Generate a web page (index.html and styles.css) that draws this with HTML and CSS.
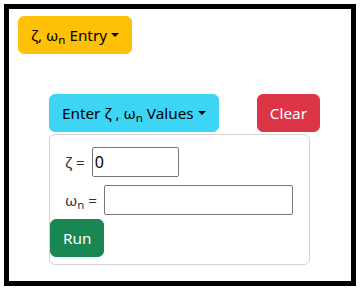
FILE: index.html
```html
<!DOCTYPE html>
<html>
<head>
    <title>Damping Entry</title>
    <link rel="stylesheet" href="styles.css">
</head>
<body>
    <div class="frame">
        <button class="btn btn-warning dropdown-toggle">ζ, ω<sub>n</sub> Entry</button>

        <div class="panel">
            <div class="panel-head">
                <button class="btn btn-info dropdown-toggle">Enter ζ , ω<sub>n</sub> Values</button>
                <button class="btn btn-danger">Clear</button>
            </div>
            <div class="card">
                <div class="field">
                    <label for="zeta">ζ =</label>
                    <input type="text" id="zeta" class="zeta-input" value="0">
                </div>
                <div class="field">
                    <label for="omega">ω<sub>n</sub> =</label>
                    <input type="text" id="omega" class="omega-input">
                </div>
                <button class="btn btn-success">Run</button>
            </div>
        </div>
    </div>
</body>
</html>
```

FILE: styles.css
```css
body {
    margin: 0;
    font-family: "Noto Sans", "Open Sans", sans-serif;
    font-size: 15.3px;
    line-height: 1.5;
    color: #212529;
    background-color: #fff;
}
.frame {
    box-sizing: border-box;
    width: 352px;
    height: 282px;
    margin: 4px;
    border: 5px solid #000;
    padding: 7px 9px;
}
.btn {
    font-family: inherit;
    font-size: 15.3px;
    line-height: 24px;
    padding: 6px 12px;
    border: 1px solid transparent;
    border-radius: 6px;
    cursor: pointer;
    color: #000;
}
.btn sub, .field sub {
    font-size: 0.75em;
    line-height: 0;
    vertical-align: -0.25em;
}
.dropdown-toggle::after {
    content: "";
    display: inline-block;
    margin-left: 0.255em;
    vertical-align: 0.255em;
    border-top: 0.3em solid;
    border-right: 0.3em solid transparent;
    border-left: 0.3em solid transparent;
}
.btn-warning {
    background-color: #ffc107;
    border-color: #ffc107;
}
.btn-info {
    background-color: #3dd5f3;
    border-color: #3dd5f3;
}
.btn-danger {
    background-color: #dc3545;
    border-color: #dc3545;
    color: #fff;
}
.btn-success {
    background-color: #198754;
    border-color: #198754;
    color: #fff;
}
.panel {
    width: 271px;
    margin: 40px 0 0 31px;
}
.panel-head {
    display: flex;
    justify-content: space-between;
}
.card {
    box-sizing: border-box;
    width: 261px;
    height: 131px;
    margin-top: 2px;
    padding: 12px 0 0 0;
    border: 1px solid #d3d3d3;
    border-radius: 6px;
}
.field {
    display: flex;
    align-items: center;
    padding-left: 15px;
    margin-bottom: 8px;
    color: #333;
}
.field:last-of-type {
    margin-bottom: 4px;
}
.field label {
    margin-right: 7px;
}
.field input {
    box-sizing: border-box;
    height: 30px;
    padding: 1px 2px;
    font-family: inherit;
    font-size: 16px;
    color: #000;
    border: 1px solid #767676;
    border-radius: 2px;
}
.zeta-input {
    width: 87px;
}
.omega-input {
    width: 189px;
}
```
